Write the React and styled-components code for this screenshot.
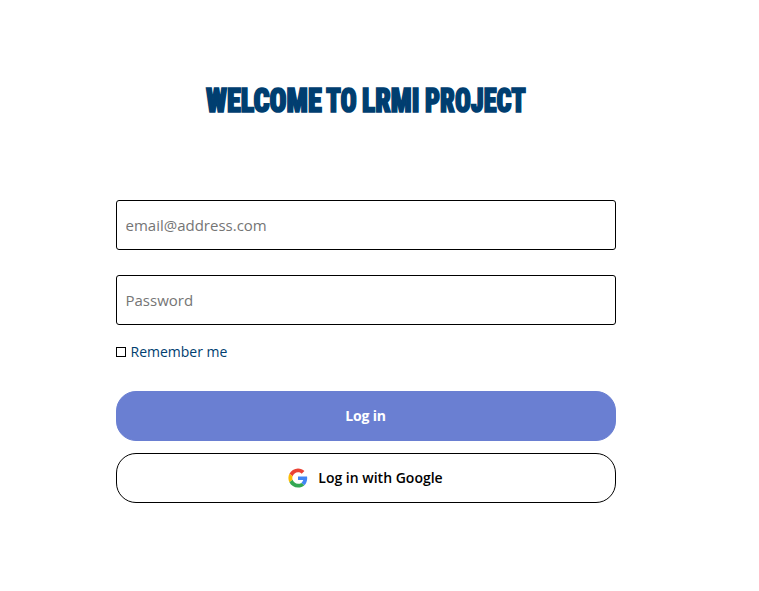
import React from "react";
import styled, { createGlobalStyle } from "styled-components";

const GlobalStyle = createGlobalStyle`
  * { box-sizing: border-box; }
  body {
    margin: 0;
    background: #fff;
    font-family: "Open Sans", sans-serif;
  }
`;

const Page = styled.main`
  width: 500px;
  margin: 76px 0 0 116px;
`;

const Title = styled.h1`
  display: grid;
  grid-template-columns: 120px 36px 63px 101px;
  justify-content: center;
  margin: 0 0 76px;
  height: 48px;
  padding-right: 1px;
  font: 900 32.8px/50px Roboto, sans-serif;
  font-stretch: 75%;
  color: #003e70;
  -webkit-text-stroke: 1.7px #003e70;
`;

const Word = styled.span`
  white-space: nowrap;
  transform: scaleX(${(p) => p.$scale});
  transform-origin: left;
`;

const Form = styled.form`
  display: flex;
  flex-direction: column;
`;

const Field = styled.input`
  width: 100%;
  height: 50px;
  margin: 0 0 25px;
  padding: 1px 8.5px;
  border: 1px solid #000;
  border-radius: 3px;
  outline: none;
  background: #fff;
  font: 400 15px "Open Sans", sans-serif;
  &::placeholder { color: #757575; }
`;

const Remember = styled.label`
  display: flex;
  align-items: center;
  gap: 4.5px;
  height: 20px;
  margin: -8px 0 29px;
  color: #003e70;
  font-size: 14px;
  line-height: 20px;
`;

const Checkbox = styled.input`
  appearance: none;
  width: 10px;
  height: 10px;
  margin: 0;
  border: 1px solid #000;
  background: #fff;
`;

const Button = styled.button`
  display: flex;
  align-items: center;
  justify-content: center;
  gap: 10px;
  height: 50px;
  margin: 0 0 12px;
  padding: 0 1px 0 0;
  border: 1px solid ${(p) => (p.$primary ? "#6a7fd2" : "#000")};
  border-radius: 20px;
  background: ${(p) => (p.$primary ? "#6a7fd2" : "#fff")};
  color: ${(p) => (p.$primary ? "#fff" : "#000")};
  font: ${(p) => (p.$primary ? 700 : 600)} 14px/20px "Open Sans", sans-serif;
  letter-spacing: ${(p) => (p.$primary ? "-0.15px" : "0")};
`;

const GoogleIcon = () => (
  <svg width="20" height="20" viewBox="-1 -1 50 50" aria-hidden="true">
    <path fill="#EA4335" d="M24 9.5c3.54 0 6.71 1.22 9.21 3.6l6.85-6.85C35.9 2.38 30.47 0 24 0 14.62 0 6.51 5.38 2.56 13.22l7.98 6.19C12.43 13.72 17.74 9.5 24 9.5z" />
    <path fill="#4285F4" d="M46.98 24.55c0-1.57-.15-3.09-.38-4.55H24v9.02h12.94c-.58 2.96-2.26 5.48-4.78 7.18l7.73 6c4.51-4.18 7.09-10.36 7.09-17.65z" />
    <path fill="#FBBC05" d="M10.53 28.59c-.48-1.45-.76-2.99-.76-4.59s.27-3.14.76-4.59l-7.98-6.19C.92 16.46 0 20.12 0 24c0 3.88.92 7.54 2.56 10.78l7.97-6.19z" />
    <path fill="#34A853" d="M24 48c6.48 0 11.93-2.13 15.89-5.81l-7.73-6c-2.15 1.45-4.92 2.3-8.16 2.3-6.26 0-11.57-4.22-13.47-9.91l-7.98 6.19C6.51 42.62 14.62 48 24 48z" />
  </svg>
);

export default function App() {
  return (
    <>
      <GlobalStyle />
      <Page>
        <Title>
          <Word $scale={0.86}>WELCOME </Word>
          <Word $scale={0.82}>TO </Word>
          <Word $scale={0.84}>LRMI </Word>
          <Word $scale={0.8}>PROJECT</Word>
        </Title>
        <Form>
          <Field type="email" placeholder="email@address.com" />
          <Field type="password" placeholder="Password" />
          <Remember><Checkbox type="checkbox" />Remember me</Remember>
          <Button type="button" $primary>Log in</Button>
          <Button type="button"><GoogleIcon />Log in with Google</Button>
        </Form>
      </Page>
    </>
  );
}
